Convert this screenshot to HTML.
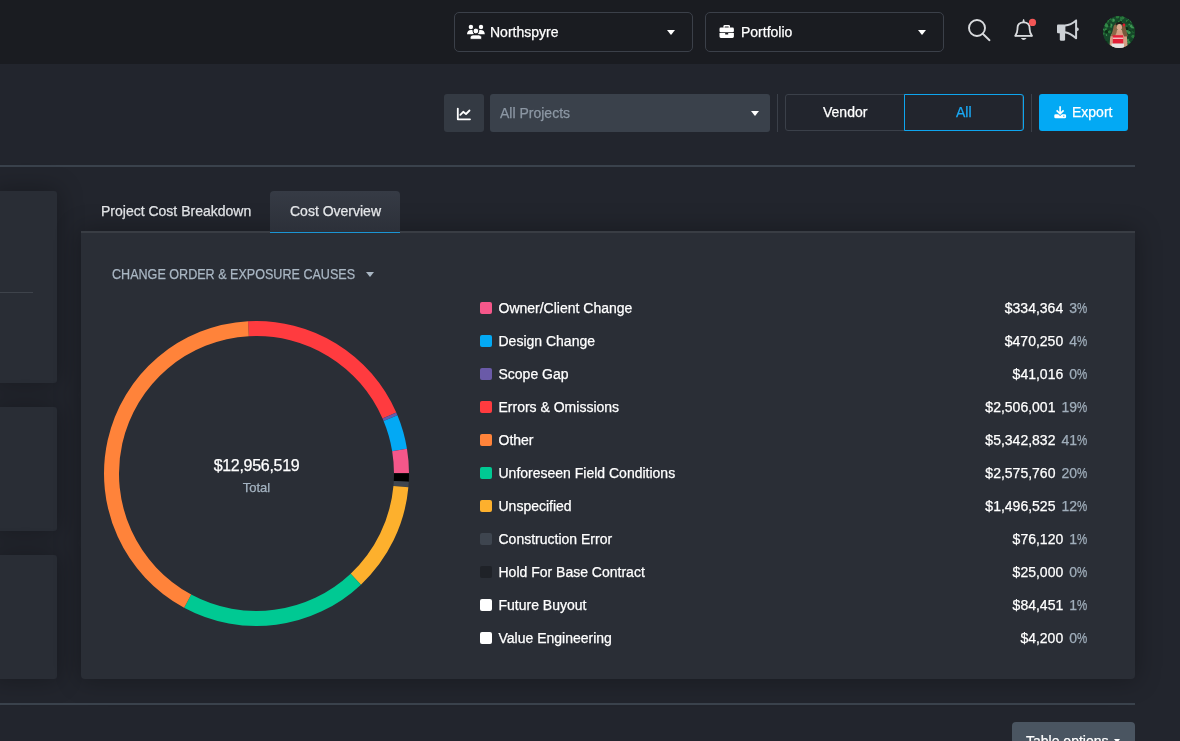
<!DOCTYPE html>
<html><head><meta charset="utf-8">
<style>
*{box-sizing:border-box;margin:0;padding:0}
html,body{width:1180px;height:741px;overflow:hidden;background:#22252d;font-family:"Liberation Sans",sans-serif;color:#fff;font-size:14px}
span{-webkit-text-stroke:0.25px currentColor}
#root{position:absolute;left:0;top:0;width:1180px;height:741px;will-change:transform}
.abs{position:absolute}
#hdr{position:absolute;left:0;top:0;width:1180px;height:64px;background:#1a1c21}
.dd{position:absolute;top:12px;height:40px;width:239px;border:1px solid #3b4049;border-radius:5px}
.dd .txt{position:absolute;top:11px;font-size:14px;color:#fff;line-height:16px}
.caret{position:absolute;width:0;height:0;border-left:4.5px solid transparent;border-right:4.5px solid transparent;border-top:5.5px solid #fff}
.hline{position:absolute;left:0;width:1135px;height:2px;background:#3a424c}
.card{position:absolute;left:-6px;width:63px;background:#292d35;border-radius:3px;box-shadow:0 0 24px 2px rgba(0,0,0,0.28)}
#panel{position:absolute;left:81px;top:231px;width:1054px;height:448px;background:#2a2e36;border-top:2px solid #393d44;border-radius:0 0 4px 4px;box-shadow:0 0 24px 2px rgba(0,0,0,0.28)}
.lrow{position:absolute;left:480px;width:607px;height:22px}
.sw{position:absolute;left:0;top:5px;width:12px;height:12px;border-radius:2px}
.lab{position:absolute;left:18.5px;top:3px;line-height:16px;color:#fff}
.val{position:absolute;right:0;top:3px;line-height:16px;color:#fff;text-align:right}
.pct{color:#a0aebb;margin-left:6px}
.pc{display:inline-block;width:10px;transform:scaleX(0.82);transform-origin:0 0}
</style></head><body><div id="root">
<div id="hdr">
  <div class="dd" style="left:454px">
    <span class="txt" style="left:35px">Northspyre</span>
    <span class="caret" style="left:212px;top:17px"></span>
  </div>
  <div class="dd" style="left:705px">
    <span class="txt" style="left:35px">Portfolio</span>
    <span class="caret" style="left:212px;top:17px"></span>
  </div>
</div>
<!-- toolbar -->
<div class="abs" style="left:444px;top:94px;width:40px;height:38px;background:#343a43;border-radius:3px"></div>
<div class="abs" style="left:490px;top:94px;width:280px;height:38px;background:#3a414b;border-radius:3px">
  <span class="abs" style="left:10px;top:11px;line-height:16px;color:#8c97a4">All Projects</span>
  <span class="caret" style="left:261px;top:17px"></span>
</div>
<div class="abs" style="left:777px;top:94px;width:1px;height:38px;background:#3b4049"></div>
<div class="abs" style="left:785px;top:94px;width:238px;height:37px;border:1px solid #3b4049;border-radius:3px"></div>
<div class="abs" style="left:904px;top:94px;width:120px;height:37px;border:1px solid #0ea5ee;border-radius:0 3px 3px 0"></div>
<span class="abs" style="left:823px;top:104px;line-height:16px">Vendor</span>
<span class="abs" style="left:956px;top:104px;line-height:16px;color:#1aa9f5">All</span>
<div class="abs" style="left:1031px;top:94px;width:1px;height:38px;background:#3b4049"></div>
<div class="abs" style="left:1039px;top:94px;width:89px;height:37px;background:#03a9f4;border-radius:3px">
  <span class="abs" style="left:33px;top:10px;line-height:16px">Export</span>
</div>
<div class="hline" style="top:165px"></div>
<div class="card" style="top:191px;height:192px"><div class="abs" style="left:0;top:101px;width:39px;height:1px;background:#3e434b"></div></div>
<div class="card" style="top:407px;height:124px"></div>
<div class="card" style="top:555px;height:124px"></div>
<!-- tabs -->
<span class="abs" style="left:101px;top:203px;line-height:16px;color:#e4e6e9">Project Cost Breakdown</span>
<div id="panel"></div>
<div class="abs" style="left:270px;top:191px;width:130px;height:42px;border-radius:4px 4px 0 0;background:linear-gradient(#363b45,#2c3039);border-bottom:1px solid #1b95d4"></div>
<span class="abs" style="left:290px;top:203px;line-height:16px;color:#e4e6e9">Cost Overview</span>
<span class="abs" style="left:112px;top:266px;line-height:16px;color:#a9b6c3;transform:scaleX(0.898);transform-origin:0 0;white-space:nowrap">CHANGE ORDER &amp; EXPOSURE CAUSES</span>
<span class="caret" style="left:366px;top:272px;border-top-color:#a9b6c3"></span>
<svg class="abs" style="left:0;top:0" width="1180" height="741">
<path fill="#ff3b3f" d="M247.99 321.24A152.5 152.5 0 0 1 396.28 412.52L382.53 418.52A137.5 137.5 0 0 0 248.82 336.21Z"/>
<path fill="#6a5aa8" d="M396.28 412.52A152.5 152.5 0 0 1 397.46 415.31L383.60 421.04A137.5 137.5 0 0 0 382.53 418.52Z"/>
<path fill="#03a9f4" d="M397.46 415.31A152.5 152.5 0 0 1 406.97 448.69L392.17 451.13A137.5 137.5 0 0 0 383.60 421.04Z"/>
<path fill="#f5578a" d="M406.97 448.69A152.5 152.5 0 0 1 409.00 473.30L394.00 473.32A137.5 137.5 0 0 0 392.17 451.13Z"/>
<path fill="#000000" d="M409.00 473.30A152.5 152.5 0 0 1 408.78 481.70L393.80 480.90A137.5 137.5 0 0 0 394.00 473.32Z"/>
<path fill="#3e454f" d="M408.78 481.70A152.5 152.5 0 0 1 408.37 487.32L393.43 485.96A137.5 137.5 0 0 0 393.80 480.90Z"/>
<path fill="#fdb02d" d="M408.37 487.32A152.5 152.5 0 0 1 360.93 584.63L350.66 573.70A137.5 137.5 0 0 0 393.43 485.96Z"/>
<path fill="#00c993" d="M360.93 584.63A152.5 152.5 0 0 1 184.09 607.71L191.21 594.51A137.5 137.5 0 0 0 350.66 573.70Z"/>
<path fill="#ff833a" d="M184.09 607.71A152.5 152.5 0 0 1 247.99 321.24L248.82 336.21A137.5 137.5 0 0 0 191.21 594.51Z"/>
<!-- people icon -->
<g fill="#fff">
 <circle cx="470.9" cy="27" r="2.2"/>
 <circle cx="481" cy="27" r="2.2"/>
 <path d="M467 34.2C467 31.5 468.7 30 471 30C472.6 30 473.8 30.6 474.3 31.5L473.5 34.2Z"/>
 <path d="M484.8 34.2C484.8 31.5 483.1 30 480.8 30C479.2 30 478 30.6 477.5 31.5L478.3 34.2Z"/>
 <circle cx="475.9" cy="31" r="2.9" stroke="#1a1c21" stroke-width="1"/>
 <path d="M470.2 39.3V37.6Q470.2 34.9 473 34.9H478.8Q481.6 34.9 481.6 37.6V39.3Z" stroke="#1a1c21" stroke-width="0.8"/>
</g>
<!-- briefcase -->
<g fill="#fff">
 <path d="M723.4 27.8V26.3Q723.4 25 724.7 25H728.7Q730 25 730 26.3V27.8H728.6V26.6H724.8V27.8Z"/>
 <rect x="719.5" y="27.6" width="14.4" height="4.6" rx="1.3"/>
 <path d="M719.5 33H725.2V34.6H728.2V33H733.9V36.6Q733.9 38 732.5 38H720.9Q719.5 38 719.5 36.6Z"/>
</g>
<!-- search -->
<g fill="none" stroke="#d9dbde" stroke-width="1.9">
 <circle cx="977" cy="28" r="8"/>
 <path d="M982.8 33.8L989.5 40.2" stroke-linecap="round"/>
</g>
<!-- bell -->
<g fill="none" stroke="#d9dbde" stroke-width="1.8" stroke-linejoin="round">
 <path d="M1014.6 35.9H1032.6"/>
 <path d="M1015.2 35.9Q1017.5 32.5 1017.5 29V27.9Q1017.5 22.3 1023.6 22.3Q1029.6 22.3 1029.6 27.9V29Q1029.6 32.5 1032 35.9"/>
</g>
<path d="M1022.3 22.4L1023 19.6Q1023.6 18.6 1024.2 19.6L1024.9 22.4Z" fill="#d9dbde"/>
<path d="M1020.8 37.9Q1023.6 42 1026.6 37.9Z" fill="#d9dbde"/>
<circle cx="1032.5" cy="22.4" r="3.6" fill="#f35656"/>
<!-- megaphone -->
<g fill="#cdd1d6">
 <rect x="1057" y="24.4" width="8.4" height="8.8" rx="1"/>
 <rect x="1059.8" y="32" width="5.3" height="8.7" rx="1.3"/>
 <ellipse cx="1077.6" cy="29.3" rx="1.1" ry="1.8"/>
</g>
<path d="M1065 25.4Q1070.8 25 1076.1 20.4V38.3Q1070.8 33.4 1065 32.2" fill="none" stroke="#cdd1d6" stroke-width="2" stroke-linejoin="round"/>
<!-- avatar -->
<defs><clipPath id="av"><circle cx="1119" cy="32" r="16"/></clipPath></defs>
<g clip-path="url(#av)">
 <rect x="1103" y="16" width="32" height="32" fill="#16482a"/>
 <circle cx="1113.4" cy="20.8" r="1.4" fill="#2a7a3c"/>
 <circle cx="1129.3" cy="19.0" r="1.3" fill="#3f9654"/>
 <circle cx="1109.9" cy="18.8" r="1.1" fill="#338a48"/>
 <circle cx="1105.9" cy="29.6" r="1.6" fill="#2a7a3c"/>
 <circle cx="1133.3" cy="36.2" r="1.3" fill="#2a7a3c"/>
 <circle cx="1121.5" cy="28.7" r="1.8" fill="#2a7a3c"/>
 <circle cx="1120.8" cy="20.3" r="1.1" fill="#3f9654"/>
 <circle cx="1106.8" cy="25.9" r="1.6" fill="#338a48"/>
 <circle cx="1106.3" cy="34.3" r="0.8" fill="#2a7a3c"/>
 <circle cx="1120.5" cy="18.0" r="0.7" fill="#338a48"/>
 <circle cx="1118.9" cy="33.0" r="1.5" fill="#0b2e16"/>
 <circle cx="1121.7" cy="30.5" r="1.0" fill="#0e3a1c"/>
 <circle cx="1108.8" cy="41.0" r="0.7" fill="#134222"/>
 <circle cx="1119.8" cy="44.0" r="1.5" fill="#134222"/>
 <circle cx="1122.5" cy="18.3" r="1.2" fill="#338a48"/>
 <circle cx="1127.2" cy="20.9" r="1.2" fill="#2a7a3c"/>
 <circle cx="1133.8" cy="18.5" r="1.3" fill="#0e3a1c"/>
 <circle cx="1131.0" cy="26.0" r="1.4" fill="#3f9654"/>
 <circle cx="1118.9" cy="41.5" r="0.7" fill="#2a7a3c"/>
 <circle cx="1133.2" cy="31.2" r="1.4" fill="#2a7a3c"/>
 <circle cx="1126.4" cy="25.9" r="1.3" fill="#1f6634"/>
 <circle cx="1129.3" cy="25.1" r="1.1" fill="#1f6634"/>
 <circle cx="1114.1" cy="46.1" r="1.0" fill="#3f9654"/>
 <circle cx="1106.7" cy="17.9" r="1.5" fill="#338a48"/>
 <circle cx="1126.6" cy="28.7" r="1.7" fill="#0b2e16"/>
 <circle cx="1105.6" cy="30.4" r="1.3" fill="#338a48"/>
 <circle cx="1129.2" cy="43.6" r="0.9" fill="#0b2e16"/>
 <circle cx="1134.6" cy="37.8" r="1.1" fill="#338a48"/>
 <circle cx="1107.8" cy="21.6" r="0.9" fill="#338a48"/>
 <circle cx="1103.4" cy="42.6" r="0.8" fill="#134222"/>
 <circle cx="1103.1" cy="29.4" r="1.0" fill="#3f9654"/>
 <circle cx="1113.2" cy="20.0" r="1.6" fill="#3f9654"/>
 <circle cx="1124.0" cy="39.7" r="1.1" fill="#0e3a1c"/>
 <circle cx="1128.0" cy="44.0" r="1.6" fill="#0b2e16"/>
 <circle cx="1115.7" cy="28.6" r="1.2" fill="#0b2e16"/>
 <circle cx="1105.0" cy="18.2" r="0.9" fill="#338a48"/>
 <circle cx="1106.5" cy="35.2" r="0.7" fill="#3f9654"/>
 <circle cx="1107.8" cy="19.2" r="1.0" fill="#2a7a3c"/>
 <circle cx="1105.3" cy="22.7" r="1.1" fill="#1f6634"/>
 <circle cx="1111.1" cy="27.1" r="1.0" fill="#2a7a3c"/>
 <circle cx="1106.7" cy="31.6" r="1.8" fill="#0b2e16"/>
 <circle cx="1118.5" cy="18.7" r="0.7" fill="#134222"/>
 <circle cx="1126.7" cy="31.3" r="1.4" fill="#3f9654"/>
 <circle cx="1103.7" cy="46.4" r="1.2" fill="#338a48"/>
 <circle cx="1125.1" cy="45.3" r="1.5" fill="#134222"/>
 <circle cx="1134.3" cy="43.6" r="1.4" fill="#134222"/>
 <circle cx="1119.6" cy="45.1" r="1.0" fill="#338a48"/>
 <circle cx="1120.0" cy="40.9" r="1.0" fill="#338a48"/>
 <circle cx="1122.6" cy="41.2" r="1.5" fill="#338a48"/>
 <circle cx="1128.8" cy="42.2" r="1.5" fill="#338a48"/>
 <circle cx="1109.4" cy="31.8" r="1.5" fill="#2a7a3c"/>
 <circle cx="1128.3" cy="31.1" r="0.8" fill="#3f9654"/>
 <circle cx="1133.6" cy="30.3" r="1.7" fill="#134222"/>
 <circle cx="1133.6" cy="27.7" r="0.9" fill="#338a48"/>
 <circle cx="1118.0" cy="26.8" r="1.2" fill="#3f9654"/>
 <circle cx="1129.9" cy="31.3" r="1.4" fill="#0e3a1c"/>
 <circle cx="1123.6" cy="42.7" r="0.7" fill="#0b2e16"/>
 <circle cx="1128.0" cy="40.0" r="1.2" fill="#338a48"/>
 <circle cx="1116.9" cy="36.3" r="0.7" fill="#1f6634"/>
 <circle cx="1115.7" cy="28.8" r="1.7" fill="#1f6634"/>
 <circle cx="1108.1" cy="47.8" r="0.6" fill="#3f9654"/>
 <circle cx="1132.0" cy="41.8" r="0.8" fill="#0e3a1c"/>
 <circle cx="1122.1" cy="31.2" r="1.7" fill="#338a48"/>
 <circle cx="1120.6" cy="20.2" r="0.6" fill="#1f6634"/>
 <circle cx="1123.8" cy="32.9" r="1.7" fill="#0b2e16"/>
 <circle cx="1134.6" cy="22.2" r="1.6" fill="#2a7a3c"/>
 <circle cx="1111.1" cy="25.4" r="0.9" fill="#3f9654"/>
 <circle cx="1113.4" cy="33.4" r="1.6" fill="#2a7a3c"/>
 <circle cx="1132.1" cy="27.3" r="1.1" fill="#3f9654"/>
 <circle cx="1129.1" cy="32.5" r="1.6" fill="#3f9654"/>
 <circle cx="1107.2" cy="20.9" r="1.2" fill="#0e3a1c"/>
 <circle cx="1117.1" cy="21.9" r="0.6" fill="#0e3a1c"/>
 <circle cx="1107.8" cy="20.5" r="1.3" fill="#2a7a3c"/>
 <circle cx="1120.8" cy="26.4" r="1.2" fill="#3f9654"/>
 <circle cx="1118.4" cy="40.8" r="1.7" fill="#2a7a3c"/>
 <circle cx="1111.0" cy="24.9" r="1.5" fill="#3f9654"/>
 <circle cx="1117.5" cy="16.9" r="1.7" fill="#2a7a3c"/>
 <circle cx="1117.2" cy="35.6" r="1.2" fill="#3f9654"/>
 <circle cx="1109.4" cy="24.9" r="1.2" fill="#0e3a1c"/>
 <circle cx="1118.3" cy="46.1" r="1.4" fill="#134222"/>
 <circle cx="1132.5" cy="44.6" r="0.8" fill="#0b2e16"/>
 <circle cx="1107.4" cy="19.9" r="1.1" fill="#2a7a3c"/>
 <circle cx="1124.5" cy="29.7" r="0.9" fill="#134222"/>
 <circle cx="1128.1" cy="44.7" r="0.8" fill="#1f6634"/>
 <circle cx="1123.6" cy="27.7" r="0.9" fill="#338a48"/>
 <circle cx="1134.0" cy="23.0" r="1.7" fill="#0b2e16"/>
 <circle cx="1131.3" cy="21.2" r="1.4" fill="#338a48"/>
 <circle cx="1108.2" cy="29.8" r="1.2" fill="#134222"/>
 <circle cx="1116.5" cy="27.4" r="0.7" fill="#134222"/>
 <circle cx="1103.6" cy="33.7" r="1.1" fill="#2a7a3c"/>
 <circle cx="1115.3" cy="32.6" r="1.0" fill="#2a7a3c"/>
 <circle cx="1106.6" cy="45.4" r="0.9" fill="#2a7a3c"/>
 <circle cx="1105.7" cy="24.7" r="1.7" fill="#338a48"/>
 <circle cx="1111.7" cy="20.1" r="1.1" fill="#1f6634"/>
 <circle cx="1129.2" cy="24.3" r="0.8" fill="#3f9654"/>
 <circle cx="1121.3" cy="38.4" r="0.7" fill="#2a7a3c"/>
 <circle cx="1128.6" cy="21.9" r="1.7" fill="#134222"/>
 <circle cx="1133.0" cy="36.3" r="1.6" fill="#2a7a3c"/>
 <circle cx="1122.5" cy="23.1" r="0.9" fill="#2a7a3c"/>
 <circle cx="1117.5" cy="26.9" r="1.3" fill="#134222"/>
 <circle cx="1122.9" cy="17.4" r="1.5" fill="#2a7a3c"/>
 <circle cx="1134.0" cy="24.4" r="0.8" fill="#134222"/>
 <circle cx="1123.1" cy="33.0" r="0.8" fill="#0b2e16"/>
 <circle cx="1119.0" cy="21.7" r="1.0" fill="#2a7a3c"/>
 <circle cx="1134.8" cy="17.2" r="0.6" fill="#3f9654"/>
 <circle cx="1120.6" cy="22.1" r="1.2" fill="#0b2e16"/>
 <circle cx="1106.4" cy="42.2" r="1.1" fill="#0b2e16"/>
 <circle cx="1120.5" cy="44.4" r="1.8" fill="#134222"/>
 <circle cx="1125.0" cy="47.4" r="1.0" fill="#0e3a1c"/>
 <circle cx="1131.2" cy="39.3" r="0.8" fill="#134222"/>
 <path d="M1109.5 48L1110 39Q1110.5 33.5 1114 32.5L1116.5 30H1122.5L1124.5 32.5Q1127 33.5 1127 38L1127.8 48Z" fill="#d49e83"/>
 <path d="M1116.2 22.8Q1113.2 25.5 1113 29.5Q1112.2 33 1110.8 36.2L1114.8 36.6Q1116.8 33.5 1117.2 29Z" fill="#8d6848"/>
 <path d="M1122.8 22.8Q1125.8 25.5 1126 29.5Q1126.8 33 1128 36.2L1124.2 36.6Q1122.2 33.5 1121.8 29Z" fill="#7a583c"/>
 <path d="M1115.3 24Q1119.5 20 1123.9 23.6L1123.4 25Q1119.5 22.5 1115.9 25.2Z" fill="#231a18"/>
 <ellipse cx="1119.4" cy="27.3" rx="2.6" ry="3.4" fill="#dcaa8e"/>
 <rect x="1112.8" y="35.2" width="10.4" height="8.4" fill="#e41f37"/>
 <rect x="1112.8" y="37.6" width="10.4" height="1.3" fill="#f5c9cb"/>
 <rect x="1111.5" y="43.6" width="12.5" height="5" fill="#e6e4e2"/>
 <circle cx="1124" cy="25" r="1.4" fill="#e01c2c"/>
</g>
<!-- chart icon -->
<g fill="none" stroke="#fff" stroke-width="1.8" stroke-linecap="round" stroke-linejoin="round">
 <path d="M457.8 108.6V119.3H470"/>
 <path d="M460.3 114.8L463.2 111.8L466 114L469.5 110.5"/>
</g>
<!-- download icon -->
<g fill="#fff">
 <path d="M1060.1 106.3V113.6M1056.6 110.4L1060.1 113.8L1063.6 110.4" stroke="#fff" stroke-width="1.6" fill="none"/>
 <path d="M1055.6 114.2H1058.2L1060.1 116.1L1062 114.2H1064.8Q1066.1 114.2 1066.1 115.5V117Q1066.1 118.3 1064.8 118.3H1055.6Q1054.3 118.3 1054.3 117V115.5Q1054.3 114.2 1055.6 114.2Z"/>
 <circle cx="1063.8" cy="116.2" r="0.6" fill="#03a9f4"/>
</g>
</svg>
<span class="abs" style="left:0;top:457px;width:513px;text-align:center;font-size:16px;line-height:18px;letter-spacing:-0.3px">$12,956,519</span>
<span class="abs" style="left:0;top:481px;width:513px;text-align:center;font-size:13px;line-height:14px;color:#a4b3c1">Total</span>
<div class="lrow" style="top:297px"><span class="sw" style="background:#f5578a"></span><span class="lab">Owner/Client Change</span><span class="val">$334,364<span class="pct">3<span class="pc">%</span></span></span></div>
<div class="lrow" style="top:330px"><span class="sw" style="background:#03a9f4"></span><span class="lab">Design Change</span><span class="val">$470,250<span class="pct">4<span class="pc">%</span></span></span></div>
<div class="lrow" style="top:363px"><span class="sw" style="background:#6a5aa8"></span><span class="lab">Scope Gap</span><span class="val">$41,016<span class="pct">0<span class="pc">%</span></span></span></div>
<div class="lrow" style="top:396px"><span class="sw" style="background:#ff3b3f"></span><span class="lab">Errors &amp; Omissions</span><span class="val">$2,506,001<span class="pct">19<span class="pc">%</span></span></span></div>
<div class="lrow" style="top:429px"><span class="sw" style="background:#ff833a"></span><span class="lab">Other</span><span class="val">$5,342,832<span class="pct">41<span class="pc">%</span></span></span></div>
<div class="lrow" style="top:462px"><span class="sw" style="background:#00c993"></span><span class="lab">Unforeseen Field Conditions</span><span class="val">$2,575,760<span class="pct">20<span class="pc">%</span></span></span></div>
<div class="lrow" style="top:495px"><span class="sw" style="background:#fdb02d"></span><span class="lab">Unspecified</span><span class="val">$1,496,525<span class="pct">12<span class="pc">%</span></span></span></div>
<div class="lrow" style="top:528px"><span class="sw" style="background:#3e454f"></span><span class="lab">Construction Error</span><span class="val">$76,120<span class="pct">1<span class="pc">%</span></span></span></div>
<div class="lrow" style="top:561px"><span class="sw" style="background:#1f2228"></span><span class="lab">Hold For Base Contract</span><span class="val">$25,000<span class="pct">0<span class="pc">%</span></span></span></div>
<div class="lrow" style="top:594px"><span class="sw" style="background:#ffffff"></span><span class="lab">Future Buyout</span><span class="val">$84,451<span class="pct">1<span class="pc">%</span></span></span></div>
<div class="lrow" style="top:627px"><span class="sw" style="background:#ffffff"></span><span class="lab">Value Engineering</span><span class="val">$4,200<span class="pct">0<span class="pc">%</span></span></span></div>

<div class="hline" style="top:703px"></div>
<div class="abs" style="left:1012px;top:722px;width:123px;height:40px;background:#4a5561;border-radius:4px">
<span class="abs" style="left:14px;top:11px;line-height:16px;font-size:14px">Table options</span>
<span class="caret" style="left:102px;top:17px;border-left-width:3px;border-right-width:3px;border-top-width:4px"></span>
</div>
</div></body></html>
